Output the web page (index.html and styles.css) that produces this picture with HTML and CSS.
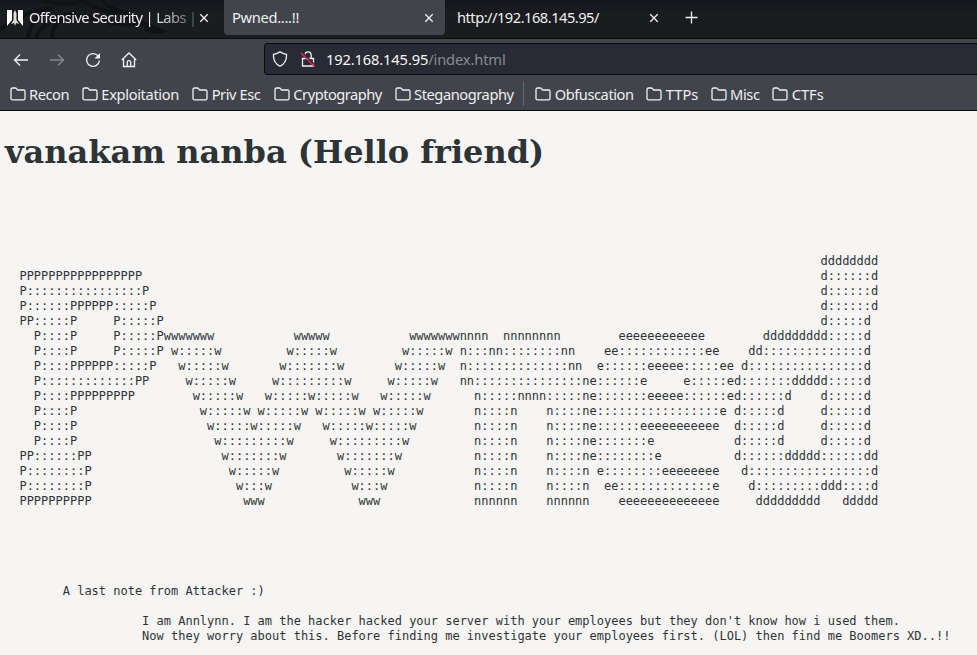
FILE: index.html
```html
<!DOCTYPE html>
<html lang="en">
<head>
<meta charset="utf-8">
<title>Pwned....!!</title>
<link rel="stylesheet" href="styles.css">
</head>
<body>
<svg class="defs" width="0" height="0" aria-hidden="true">
  <symbol id="folder" viewBox="0 0 16 16"><path d="M1 12.200V3.600Q1 2 2.600 2H5.200Q6 2 6.500 2.600L7.600 4H13.400Q15 4 15 5.600V12.200Q15 13.800 13.400 13.800H2.600Q1 13.800 1 12.200Z"/></symbol>
  <symbol id="close" viewBox="0 0 10 10"><path d="M1.300 1.300L8.700 8.700M8.700 1.300L1.300 8.700"/></symbol>
</svg>
<header class="browser">
  <div class="tabs">
    <svg class="wallpaper" viewBox="0 0 224 38"><path d="M0 30Q20 12 52 8Q30 20 28 38M36 38Q42 20 76 12M44 0Q66 8 84 0Q94 10 120 14L162 31Q150 34 140 24Q122 26 98 20Q80 12 64 18Q52 25 52 38M102 0Q112 12 134 14"/></svg>
    <div class="tab first">
      <svg class="favicon" viewBox="0 0 16 16"><path fill="#fff" d="M0 0H5V10L0 16ZM11 0H16V16L11 10Z"/><path fill="#ddd" d="M8 0L9.500 3V10L12 14L9 13L8 16L7 13L4 14L6.500 10V3Z"/></svg>
      <span class="tab-label faded">Offensive Security | Labs |</span>
      <svg class="close"><use href="#close"/></svg>
    </div>
    <div class="tab active"><span class="tab-label">Pwned....!!</span><svg class="close"><use href="#close"/></svg></div>
    <div class="tab third"><span class="tab-label">http://192.168.145.95/</span><svg class="close"><use href="#close"/></svg></div>
    <svg class="new-tab" viewBox="0 0 13 13"><path d="M6.500 .5V12.500M.5 6.500H12.500"/></svg>
  </div>
  <div class="toolbar">
    <nav class="nav">
      <svg class="icon" viewBox="0 0 16 16"><path d="M15 8H1.500M7 2.500L1.500 8L7 13.500"/></svg>
      <svg class="icon disabled" viewBox="0 0 16 16"><path d="M1 8H14.500M9 2.500L14.500 8L9 13.500"/></svg>
      <svg class="icon" viewBox="0 0 16 16"><path d="M13.200 4.200A6.400 6.400 0 1 0 14.400 8.500"/><path class="solid" d="M15 1V6.500H9.500Z"/></svg>
      <svg class="icon" viewBox="0 0 16 16"><path d="M.8 8L8 1L15.200 8M2.500 7V14.500H13.500V7M6.300 14V10Q6.300 8.700 8 8.700Q9.700 8.700 9.700 10V14"/></svg>
    </nav>
    <div class="address">
      <svg class="icon" viewBox="0 0 16 16"><path d="M8 .8C10 2.500 12 3 14.500 3.400C14.800 8.500 13 12.500 8 15.300C3 12.500 1.200 8.500 1.500 3.400C4 3 6 2.500 8 .8Z"/></svg>
      <svg class="icon" viewBox="0 0 16 16"><path d="M2.500 7.500H13.500V15H2.500ZM4.800 4.500Q5 .8 8 .8Q11.200 .8 11.200 4.500V7.500"/><path class="slash-gap" d="M2.300 1.300L15 14"/><path class="slash" d="M1 2L14.500 15.500"/></svg>
      <span class="url"><b>192.168.145.95</b>/index.html</span>
    </div>
  </div>
  <nav class="bookmarks">
    <a><svg><use href="#folder"/></svg>Recon</a>
    <a class="loose"><svg><use href="#folder"/></svg>Exploitation</a>
    <a class="spaced"><svg><use href="#folder"/></svg>Priv Esc</a>
    <a class="tight"><svg><use href="#folder"/></svg>Cryptography</a>
    <a><svg><use href="#folder"/></svg>Steganography</a>
    <i class="separator"></i>
    <a><svg><use href="#folder"/></svg>Obfuscation</a>
    <a class="short"><svg><use href="#folder"/></svg>TTPs</a>
    <a><svg><use href="#folder"/></svg>Misc</a>
    <a class="short"><svg><use href="#folder"/></svg>CTFs</a>
  </nav>
</header>
<main class="page">
<h1>vanakam nanba (Hello friend)</h1>
<pre class="banner">
                                                                                                                 dddddddd
  PPPPPPPPPPPPPPPPP                                                                                              d::::::d
  P::::::::::::::::P                                                                                             d::::::d
  P::::::PPPPPP:::::P                                                                                            d::::::d
  PP:::::P     P:::::P                                                                                           d:::::d
    P::::P     P:::::Pwwwwwww           wwwww           wwwwwwwnnnn  nnnnnnnn        eeeeeeeeeeee        ddddddddd:::::d
    P::::P     P:::::P w:::::w         w:::::w         w:::::w n:::nn::::::::nn    ee::::::::::::ee    dd::::::::::::::d
    P::::PPPPPP:::::P   w:::::w       w:::::::w       w:::::w  n::::::::::::::nn  e::::::eeeee:::::ee d::::::::::::::::d
    P:::::::::::::PP     w:::::w     w:::::::::w     w:::::w   nn:::::::::::::::ne::::::e     e:::::ed:::::::ddddd:::::d
    P::::PPPPPPPPP        w:::::w   w:::::w:::::w   w:::::w      n:::::nnnn:::::ne:::::::eeeee::::::ed::::::d    d:::::d
    P::::P                 w:::::w w:::::w w:::::w w:::::w       n::::n    n::::ne:::::::::::::::::e d:::::d     d:::::d
    P::::P                  w:::::w:::::w   w:::::w:::::w        n::::n    n::::ne::::::eeeeeeeeeee  d:::::d     d:::::d
    P::::P                   w:::::::::w     w:::::::::w         n::::n    n::::ne:::::::e           d:::::d     d:::::d
  PP::::::PP                  w:::::::w       w:::::::w          n::::n    n::::ne::::::::e          d::::::ddddd::::::dd
  P::::::::P                   w:::::w         w:::::w           n::::n    n::::n e::::::::eeeeeeee   d:::::::::::::::::d
  P::::::::P                    w:::w           w:::w            n::::n    n::::n  ee:::::::::::::e    d:::::::::ddd::::d
  PPPPPPPPPP                     www             www             nnnnnn    nnnnnn    eeeeeeeeeeeeee     ddddddddd   ddddd





        A last note from Attacker :)

                   I am Annlynn. I am the hacker hacked your server with your employees but they don't know how i used them.
                   Now they worry about this. Before finding me investigate your employees first. (LOL) then find me Boomers XD..!!
</pre>
</main>
</body>
</html>
```
FILE: styles.css
```css
* { box-sizing: border-box; }
body { margin: 0; height: 655px; overflow: hidden; background: #f6f5f4; color: #2e3436; }
svg { flex: none; fill: none; stroke: #f2f2f2; stroke-width: 1.3; }
.defs { position: absolute; }
.browser { height: 111px; background: #42444b; border-bottom: 1px solid #0c0c0d; color: #efeff0; font: 14.67px/20px "Noto Sans", sans-serif; letter-spacing: -.44px; }
.tabs { position: relative; display: flex; height: 39px; background: linear-gradient(#15161b, #1b1c20 40%); border-bottom: 1px solid #0c0c0d; }
.wallpaper { position: absolute; left: 0; top: 0; width: 224px; height: 38px; stroke: #111216; stroke-width: 4; }
.tab { position: relative; display: flex; align-items: center; height: 35px; white-space: nowrap; }
.first { width: 224px; padding: 0 15px 0 7px; }
.active { width: 221px; padding: 0 11px 0 8px; background: #42444b; border-radius: 0 0 4px 4px; letter-spacing: -.3px; }
.third { width: 224px; padding: 0 10px 0 12px; }
.tab-label { flex: 1; padding-bottom: 2px; }
.third .tab-label { letter-spacing: -.5px; }
.faded { letter-spacing: -.6px; mask-image: linear-gradient(to right, #000 74%, rgba(0, 0, 0, .2)); }
.favicon { width: 16px; height: 16px; margin-right: 6px; stroke: none; }
.close { width: 10px; height: 10px; }
.new-tab { width: 13px; height: 13px; margin: 11px 0 0 16px; }
.toolbar { display: flex; height: 40px; align-items: center; }
.nav { display: flex; width: 264px; gap: 20px; padding-left: 13px; }
.icon { width: 16px; height: 16px; }
.nav .icon { margin-top: 1px; }
.disabled { opacity: .4; }
.icon .solid { fill: #f2f2f2; stroke: none; }
.icon .slash-gap { stroke: #282a36; }
.icon .slash { stroke: #e22850; stroke-width: 1.5; }
.address { display: flex; align-items: center; flex: 1; height: 32px; padding-left: 7px; gap: 12px; background: #282a36; border: 1px solid #0c0c0d; border-right: 0; border-radius: 4px 0 0 4px; }
.url { margin-left: -2px; color: #8b8c91; letter-spacing: -.13px; }
.url b { color: #f8f8f2; font-weight: 400; }
.bookmarks { display: flex; height: 29px; align-items: center; padding-left: 9.5px; }
.bookmarks a { display: flex; align-items: center; gap: 3.5px; margin-right: 12.7px; white-space: nowrap; }
.bookmarks .loose { letter-spacing: -.35px; margin-right: 13.2px; }
.bookmarks .spaced { margin-right: 13.5px; }
.bookmarks .tight { letter-spacing: -.5px; }
.bookmarks .short { letter-spacing: 0; margin-right: 12.3px; }
.bookmarks svg { width: 16px; height: 16px; }
.separator { height: 25px; margin: 0 11px 0 -3.2px; border-left: 1px solid #66686e; }
.page { padding: 22px 0 0 5px; }
h1 { margin: 0; height: 38px; font: bold 32px/38px "DejaVu Serif", serif; }
.banner { margin: 83px 0 0; font: 12px/15px "DejaVu Sans Mono", monospace; letter-spacing: -.008px; }
```
